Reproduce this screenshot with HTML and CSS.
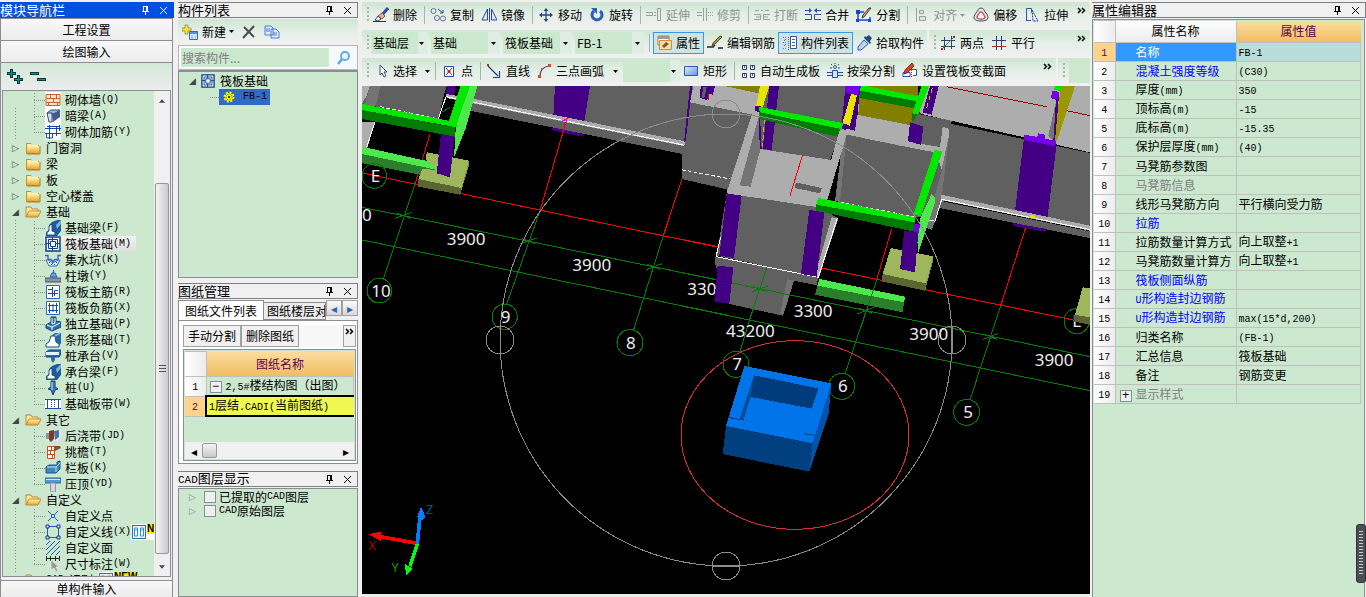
FILE: index.html
```html
<!DOCTYPE html>
<html lang="zh-CN">
<head>
<meta charset="utf-8">
<title>筏板基础 FB-1</title>
<link rel="stylesheet" href="styles.css">
</head>
<body>
<svg class="defs" aria-hidden="true">
  <defs>
    <linearGradient id="gFold" x1="0" y1="0" x2="0" y2="1"><stop offset="0" stop-color="#fff3b0"/><stop offset="1" stop-color="#e8a62c"/></linearGradient>
    <linearGradient id="gRect" x1="0" y1="0" x2="1" y2="1"><stop offset="0" stop-color="#e4efff"/><stop offset="1" stop-color="#5b92ee"/></linearGradient>
  </defs>
  <symbol id="pin" viewBox="0 0 9 9"><path d="M2 0h5v5h1v1H5v3H4V6H1V5h1zM3 1v4h2V1z" fill="currentColor" fill-rule="evenodd"/></symbol>
  <symbol id="close" viewBox="0 0 9 9"><path d="M1 1l7 7M8 1L1 8" stroke="currentColor" fill="none"/></symbol>
  <symbol id="more" viewBox="0 0 9 7"><path d="M1 1l2.500 2.500L1 6M5 1l2.500 2.500L5 6" stroke="#000" stroke-width="1.500" fill="none"/></symbol>
  <symbol id="caret" viewBox="0 0 5 3"><path d="M0 0h5L2.500 3z" fill="currentColor"/></symbol>
  <symbol id="folder" viewBox="0 0 16 16"><path d="M1 3h5l1 2h7v9H1z" fill="#c98f2a"/><path d="M2 4h4l1 1h6v1H2z" fill="#fff1b0"/><path d="M2 6h13v7H2z" fill="url(#gFold)"/><path d="M15 6v8H2" stroke="#a87a2d" fill="none"/></symbol>
  <symbol id="folderopen" viewBox="0 0 16 16"><path d="M1 13V3h5l1 2h6v2" fill="#ffe9a0" stroke="#b98a35"/><path d="M4 7h12l-3 6H1z" fill="url(#gFold)" stroke="#b98a35"/></symbol>
  <symbol id="brick" viewBox="0 0 16 16"><path d="M0 0h16v16H0z" fill="#fff"/><path d="M1 2.500h14v11H1z" fill="#ffe3cc" stroke="#c0622c"/><path d="M1 6.500h14M1 10.500h14M5.500 3v3M11.500 3v3M8.500 7v3M3.500 11v3M12.500 11v3" stroke="#c0622c"/></symbol>
  <symbol id="darkbeam" viewBox="0 0 16 16"><path d="M0 0h16v16H0z" fill="#fff"/><path d="M2 5l4-3h9l-3 4H3z" fill="#aab6d6" stroke="#33446f"/><path d="M7 6l8-4v7l-7 5z" fill="#41598c"/><path d="M2 5h5v9H4z" fill="#d7deef" stroke="#33446f"/></symbol>
  <symbol id="wallrebar" viewBox="0 0 16 16"><path d="M0 0h16v16H0z" fill="#fff"/><path d="M0 4.500h16M0 9.500h16M4.500 1v14M11.500 2v10M2 2.500h12M7.500 9v5h-6v-4M14.500 1v6" stroke="#1646a8" fill="none"/></symbol>
  <symbol id="beam" viewBox="0 0 16 16"><path d="M7 2l5-2h4v11l-4 5H1v-4l3-2V5z" fill="#205b9c"/><path d="M2 12l2-1V6l3-2v7l3 1v3H2z" fill="#fff" stroke="#1a4f90"/><path d="M11 5l5-5v4l-4 5z" fill="#79b6dc"/></symbol>
  <symbol id="raft" viewBox="0 0 16 16"><path d="M1 1h14v14H1z" fill="#f2f8ff" stroke="#0b3f86" stroke-width="1.500"/><path d="M3.500 3.500h9v9h-9z" fill="none" stroke="#0b3f86"/><path d="M5.500 5.500h5v5h-5z" fill="#fff" stroke="#0b3f86"/><path d="M7.500 1v4M7.500 11v4M1 7.500h4M11 7.500h4" stroke="#0b3f86"/></symbol>
  <symbol id="sump" viewBox="0 0 16 16"><path d="M0 3.500h3v4h3l2 2 2-2h3v-4h3" fill="none" stroke="#2c66c0" stroke-width="1.300"/><path d="M1 8l3 6h8l3-6-2 0-5 3-5-3z" fill="#e8f2ff" stroke="#2c66c0"/><path d="M4 10.500h1m2 1h1m3-1h1M6 12.500h1m2 0h1" stroke="#174ea0"/></symbol>
  <symbol id="pier" viewBox="0 0 16 16"><path d="M0 10h16v4H0z" fill="#8694a8" stroke="#46566d"/><path d="M5 9l2-4h3l2 4z" fill="#6ca3df" stroke="#2b5ea0"/><path d="M8 2h1v3H8z" fill="#2b5ea0"/></symbol>
  <symbol id="mainbar" viewBox="0 0 16 16"><path d="M1.500 1.500h13v13h-13z" fill="#fff" stroke="#2c66c0"/><path d="M3 5.500h4.500V3M7.500 5v8M3 9.500h10M9.500 12V6.500H13" stroke="#1449b0" fill="none"/></symbol>
  <symbol id="negbar" viewBox="0 0 16 16"><path d="M1.500 1.500h13v13h-13z" fill="#fff" stroke="#2c66c0"/><path d="M4.500 3v10M11.500 3v10M3 5.500h10M3 10.500h10M8 4v8" stroke="#1449b0" fill="none"/></symbol>
  <symbol id="isolated" viewBox="0 0 16 16"><path d="M1 9l5-3V1h5v4l5 1v5l-9 4-6-3z" fill="#2f6fac" stroke="#0d417c"/><path d="M2 9l5 2 8-4M7 11v3M7 2v6l3-1V2" stroke="#fff" fill="none"/></symbol>
  <symbol id="strip" viewBox="0 0 16 16"><path d="M5 5l5-4h6v10l-3 4z" fill="#2a65a5"/><path d="M1 15v-3l3-2 2-6h4l1 6 3 2v3z" fill="#fff" stroke="#17508e"/><path d="M10 4l5-3" stroke="#82bce0" stroke-width="2"/></symbol>
  <symbol id="pilecap" viewBox="0 0 16 16"><path d="M1 4l3-2h12v4l-2 3H1z" fill="#2f6bab" stroke="#0f4480"/><path d="M1 4h13v3H1z" fill="#e6f1fb"/><path d="M6 9h4v3l-2 3-2-3z" fill="#2f6bab"/></symbol>
  <symbol id="pile" viewBox="0 0 16 16"><path d="M6 1h4v6l3 2-3 1-2 5-2-5-3-1 3-2z" fill="#3a79b8" stroke="#0f3c75"/><path d="M7 2v8" stroke="#cfe4f5"/></symbol>
  <symbol id="band" viewBox="0 0 16 16"><path d="M0 3h16v10H0z" fill="#fff"/><path d="M0 3.500h16M0 12.500h16" stroke="#1f4ea0"/><path d="M2.500 4v8M13.500 4v8" stroke="#1f4ea0"/><path d="M6.500 4v8M9.500 4v8" stroke="#1f4ea0" stroke-dasharray="1 1"/></symbol>
  <symbol id="pourband" viewBox="0 0 16 16"><path d="M1 4l3-2h12v7l-4 4H1z" fill="#e6e9f2"/><path d="M4 3l5-1v9l-3 3-2-2z" fill="#7a3e18"/><path d="M9 3l5-1v7l-4 3z" fill="#4b71b5"/><path d="M1 5h3v6H1z" fill="#8a93a8"/></symbol>
  <symbol id="eaves" viewBox="0 0 16 16"><path d="M2.500 2.500h7v12h-7z" fill="#fff3e6" stroke="#b05a25"/><path d="M2 6.500h7M2 10.500h7M6.500 3v3M5.500 7v3M7.500 11v3" stroke="#b05a25"/><path d="M9 2h6l1 2-6 3z" fill="#70563f"/></symbol>
  <symbol id="railing" viewBox="0 0 16 16"><path d="M1 7l3-2h8V2l3-1v8l-4 4H1z" fill="#3f87c2" stroke="#18558d"/><path d="M2 7h9l4-4M11 7v5" stroke="#c5e3f5" fill="none"/></symbol>
  <symbol id="coping" viewBox="0 0 16 16"><path d="M0 2h16v5H0z" fill="#5a98d4" stroke="#2a67a8"/><path d="M1 3.500h14" stroke="#d3e8fa"/><path d="M5.500 7h5v9h-5z" fill="#d4d8de" stroke="#9097a3"/></symbol>
  <symbol id="ppoint" viewBox="0 0 16 16"><path d="M3 3l3 3M13 3l-3 3M3 13l3-3M13 13l-3-3" stroke="#1f57b8"/><path d="M6.500 6.500h3v3h-3z" fill="#d7e6fa" stroke="#1f57b8"/></symbol>
  <symbol id="pline" viewBox="0 0 16 16"><path d="M2.500 2.500h11v11h-11z" fill="none" stroke="#2057c0"/><path d="M1 1h3v3H1zM12 1h3v3h-3zM1 12h3v3H1zM12 12h3v3h-3z" fill="#cde0f8" stroke="#163f8c"/></symbol>
  <symbol id="parea" viewBox="0 0 16 16"><path d="M1 5l4-4M1 10l9-9M1 15L15 1M6 15l9-9M11 15l4-4" stroke="#2057c0"/></symbol>
  <symbol id="dim" viewBox="0 0 16 16"><path d="M1.500 0v5M14.500 0v5M1 2.500h14M5.500 0v5M10.500 0v5" stroke="#222"/><path d="M6 4v10l3-2 2 4 2-1-2-4h3z" fill="#9a9a9a" stroke="#fff" stroke-width=".5"/></symbol>
  <symbol id="book" viewBox="0 0 14 14"><path d="M0 0h14v14H0z" fill="#e8f4ff" stroke="#2d6fa8" stroke-width="2"/><path d="M2.500 3h3v8h-3zM8.500 3h3v8h-3z" fill="#fff" stroke="#2f8fe0"/><path d="M3 5h2M9 5h2" stroke="#2f8fe0"/></symbol>
  <symbol id="gear" viewBox="0 0 12 12"><circle cx="6" cy="6" r="4" fill="#ff0"/><circle cx="6" cy="6" r="4.500" fill="none" stroke="#ff0" stroke-width="2" stroke-dasharray="2 1.500"/><circle cx="6" cy="6" r="3" fill="none" stroke="#3a3a00" stroke-dasharray="1 1"/><circle cx="6" cy="6" r="1" fill="#000"/></symbol>
  <symbol id="new" viewBox="0 0 16 16"><path d="M3 1h3v3h3v3H6v3H3V7H0V4h3z" fill="#f5e04d" stroke="#a08c20" stroke-width=".8"/><path d="M7.500 7.500h8v8h-8z" fill="#dcecff" stroke="#3b69b0"/><path d="M8 8h7v2H8z" fill="#5b92de"/><path d="M9 12h2m2 0h1M9 14h2m2 0h1" stroke="#7ba0d8"/></symbol>
  <symbol id="del" viewBox="0 0 14 14"><path d="M2 2l10 10M12 1L1 13" stroke="#4c4c4c" stroke-width="2" fill="none"/></symbol>
  <symbol id="copydoc" viewBox="0 0 16 14"><path d="M1 1h6l2 2v7H1zM7 4h5l3 3v6H7z" fill="#e3eefc" stroke="#4a7cc8"/><path d="M2 4h4M2 6h4M9 8h4M9 10h4" stroke="#4a7cc8"/></symbol>
  <symbol id="mag" viewBox="0 0 14 14"><circle cx="8" cy="5" r="4" fill="#eef7ff" stroke="#59a9e6" stroke-width="1.800"/><path d="M5 8l-4 5" stroke="#59a9e6" stroke-width="2.500"/></symbol>
  <symbol id="erase" viewBox="0 0 16 16"><path d="M15 1l-6 7" stroke="#304f9a" stroke-width="3"/><path d="M9 6l3 3-3 3-4-3z" fill="#e9b27c" stroke="#a0592b"/><path d="M5 9l3 3-3 2-3-1z" fill="#eef3ff" stroke="#33487a"/><path d="M0 14.500h13" stroke="#223a70"/></symbol>
  <symbol id="copy" viewBox="0 0 16 16"><circle cx="3.500" cy="4" r="2.500" fill="#e9edf3" stroke="#65738a"/><circle cx="7" cy="11" r="2.500" fill="#e9edf3" stroke="#65738a"/><circle cx="13" cy="11.500" r="2.500" fill="#e9edf3" stroke="#65738a"/><path d="M8 2l5 4M13 3v3h-3" stroke="#2b4d8e" fill="none"/></symbol>
  <symbol id="mirror" viewBox="0 0 16 16"><path d="M6.500 2v11H1zM10.500 2v11H16z" fill="#dfe9fb" stroke="#28499a"/><path d="M8.500 1v14" stroke="#28499a"/></symbol>
  <symbol id="move" viewBox="0 0 16 16"><path d="M8 2v12M2 8h12" stroke="#23458c" stroke-width="1.300"/><path d="M8 1l2.500 3h-5zM8 15l2.500-3h-5zM1 8l3-2.500v5zM15 8l-3-2.500v5z" fill="#23458c"/></symbol>
  <symbol id="rotate" viewBox="0 0 16 16"><path d="M11 4a5 5 0 1 1-6 0" fill="none" stroke="#2c5fb8" stroke-width="3"/><path d="M2 1h6v6z" fill="#2c5fb8"/></symbol>
  <symbol id="extend" viewBox="0 0 16 16"><path d="M0 5.500h6.500v3H0M8 5.500h2M8 8.500h2M11.500 1.500h3v12h-3z" fill="none" stroke="#98a09c"/></symbol>
  <symbol id="trim" viewBox="0 0 16 16"><path d="M0 5.500h5M0 8.500h5M6.500 1v13M9.500 1v13M11 5.500h1m1 0h1m1 0h1M11 8.500h1m1 0h1m1 0h1" fill="none" stroke="#98a09c"/></symbol>
  <symbol id="break" viewBox="0 0 16 16"><path d="M1 3.500h4m2 0h2m2 0h4M0 7.500h6.500v5H0M16 7.500H9.500v5H16M2 10h4M10 10h4" fill="none" stroke="#98a09c"/></symbol>
  <symbol id="merge" viewBox="0 0 16 16"><path d="M0 3.500h6m4 0h6M0 12.500h6.500v-5H0M16 12.500H9.500v-5H16" fill="none" stroke="#35507f"/><path d="M4 1l3 2.500-3 2.500zM12 1L9 3.500 12 6z" fill="#2751a8"/></symbol>
  <symbol id="split" viewBox="0 0 16 16"><path d="M2 5h6M2 5v8h12v-3" fill="none" stroke="#1747d0" stroke-width="1.500"/><path d="M0 3h4v4H0zM0 12h3v3H0zM12 12h3v3h-3z" fill="#1747d0"/><path d="M15 1l-7 9-2 1 1-3 6-7z" fill="#e2a55e" stroke="#3b3b3b"/></symbol>
  <symbol id="align" viewBox="0 0 16 16"><path d="M3.500 1v14M6.500 3.500h4v3h-4zM6.500 9.500h6v4h-6z" fill="#dde3df" stroke="#98a09c"/></symbol>
  <symbol id="offset" viewBox="0 0 16 16"><path d="M8 1c3 0 3 3 5 5 4 5 2 8-5 8s-9-3-5-8c2-2 2-5 5-5z" fill="#f4dede" stroke="#33477c"/><path d="M8 5c2 0 2 2 3 3 2 3 1 4-3 4s-5-1-3-4c1-1 1-3 3-3z" fill="#fff" stroke="#c65050" stroke-width="1.400"/></symbol>
  <symbol id="stretch" viewBox="0 0 16 16"><path d="M2.500 13.500v-12h5v4M2 13.500h5" fill="none" stroke="#2e56b0"/><path d="M8 3l6 11H9z" fill="none" stroke="#2b3a60" stroke-dasharray="2 1"/></symbol>
  <symbol id="props" viewBox="0 0 16 16"><path d="M1 1h11v9H1z" fill="#fff" stroke="#888"/><path d="M1 1h11v3H1z" fill="#9a9a9a"/><path d="M2.500 5.500h12v9h-12z" fill="#f9dca8" stroke="#e08a28"/><path d="M5 11l4-4 3 2-5 4" fill="#7c5a2c"/></symbol>
  <symbol id="editbar" viewBox="0 0 16 16"><path d="M0 12h6l2-2M11 13h5" stroke="#222" stroke-width="1.400" fill="none"/><path d="M15 2l-7 7-3 2 1-3 7-7z" fill="#a9964c" stroke="#56491b"/></symbol>
  <symbol id="complist" viewBox="0 0 16 16"><path d="M1 2.500h2.500v3H1M1 7.500h2.500v3H1M1 13.500h2.500M6.500 2v13" fill="none" stroke="#56708f" stroke-dasharray="1 1"/><path d="M8.500 1.500h6v12h-6z" fill="#fff" stroke="#33568c"/><path d="M10 4.500h3M10 7.500h3M10 10.500h3" stroke="#2c66c0"/></symbol>
  <symbol id="picker" viewBox="0 0 16 16"><path d="M8 5l4 4-7 6H2v-3z" fill="#b9d6f2" stroke="#2a5ca0"/><path d="M8 3l6 6 1-1-1-2 2-3-3-3-3 2-1-1z" fill="#23478a"/></symbol>
  <symbol id="twopt" viewBox="0 0 16 16"><path d="M4.500 2v13M11.500 1v13M1 5.500h14M1 11.500h14" stroke="#2f3f6e"/><path d="M2 14L14 2" stroke="#2b8a2b"/><path d="M1 13h2v2H1zM13 1h2v2h-2z" fill="#9c1f1f"/></symbol>
  <symbol id="parallel" viewBox="0 0 16 16"><path d="M5.500 1v14M10.500 1v14M1 5.500h14" stroke="#2f3f6e"/><path d="M1 11.500h14" stroke="#b02828"/></symbol>
  <symbol id="cursor" viewBox="0 0 16 16"><path d="M5 2v10l2-2 2 4 2-1-2-4h3z" fill="#fff" stroke="#39507f"/></symbol>
  <symbol id="point" viewBox="0 0 16 16"><path d="M3.500 3.500h9v10h-9z" fill="#fff" stroke="#28499a"/><path d="M5 5l6 7M11 5l-6 7" stroke="#28499a"/><circle cx="8" cy="8.500" r="1.500" fill="#c22"/></symbol>
  <symbol id="line" viewBox="0 0 16 16"><path d="M2 3l10 10M13.500 8v6.500H7" stroke="#203f86" stroke-width="1.200" fill="none"/><path d="M1 1h2v2H1z" fill="#a33"/></symbol>
  <symbol id="arc" viewBox="0 0 16 16"><path d="M3 13C3 8 6 4 12 3" fill="none" stroke="#39507f" stroke-width="1.200"/><path d="M1 12h3v3H1zM4 5h2v2H4zM11 1h3v3h-3z" fill="#d8492c"/></symbol>
  <symbol id="rect" viewBox="0 0 16 16"><path d="M1.500 3.500h13v9h-13z" fill="url(#gRect)" stroke="#2c58b8"/></symbol>
  <symbol id="autoslab" viewBox="0 0 16 16"><path d="M2.500 2.500h4v4h-4zM10.500 2.500h4v4h-4zM2.500 10.500h4v4h-4zM10.500 10.500h4v4h-4z" fill="#fff" stroke="#28395f"/><path d="M4.500 3v2M12.500 3v2M4.500 11v2M12.500 11v2" stroke="#2c66c0"/></symbol>
  <symbol id="beamsplit" viewBox="0 0 16 16"><path d="M0 9.500h5.500v3H0M16 9.500h-5.500v3H16M5.500 7.500h5v7h-5z" fill="#d6e5fb" stroke="#24519c"/><circle cx="8" cy="4" r="1.500" fill="#fff" stroke="#24519c"/><path d="M8 0v1M4 1l1 1M12 1l-1 1M3 5h2M11 5h2" stroke="#24519c"/></symbol>
  <symbol id="section" viewBox="0 0 16 16"><path d="M1 9.500h7v4H1zM8 6.500h6.500v6H11" fill="#fff" stroke="#2450c0"/><path d="M9.500 3v12" stroke="#c22" stroke-dasharray="1 1"/><path d="M10 0l2 3-7 7-3 1 1-4z" fill="#d8442e" stroke="#822"/></symbol>
</svg>

<div class="app">
  <aside class="panel nav">
    <header class="title active"><h2>模块导航栏</h2><button aria-label="固定"><svg><use href="#pin"/></svg></button><button aria-label="关闭"><svg><use href="#close"/></svg></button></header>
    <div class="navbody">
      <button class="section">工程设置</button>
      <button class="section">绘图输入</button>
      <div class="navtools">
        <button aria-label="全部展开"><svg width="16" height="16" viewBox="0 0 16 16"><path d="M0 4.500h9M4.500 0v9M7 10.500h9M11.500 6v9" stroke="#003838" stroke-width="3"/><path d="M1 4.500h7M4.500 1v7M8 10.500h7M11.500 7v7" stroke="#0d9b8c"/></svg></button>
        <button aria-label="全部折叠"><svg width="16" height="16" viewBox="0 0 16 16"><path d="M0 4.500h9M7 10.500h9" stroke="#003838" stroke-width="3"/><path d="M1 4.500h7M8 10.500h7" stroke="#0d9b8c"/></svg></button>
      </div>
      <div class="treebox">
        <ul class="tree">
          <li class="open"><ul>
            <li><svg><use href="#brick"/></svg>砌体墙<i>(Q)</i></li>
            <li><svg><use href="#darkbeam"/></svg>暗梁<i>(A)</i></li>
            <li><svg><use href="#wallrebar"/></svg>砌体加筋<i>(Y)</i></li>
          </ul></li>
          <li><div class="branch"><span class="twist">▷</span><svg><use href="#folder"/></svg>门窗洞</div></li>
          <li><div class="branch"><span class="twist">▷</span><svg><use href="#folder"/></svg>梁</div></li>
          <li><div class="branch"><span class="twist">▷</span><svg><use href="#folder"/></svg>板</div></li>
          <li><div class="branch"><span class="twist">▷</span><svg><use href="#folder"/></svg>空心楼盖</div></li>
          <li class="open"><div class="branch"><span class="twist">◢</span><svg><use href="#folderopen"/></svg>基础</div><ul>
            <li><svg><use href="#beam"/></svg>基础梁<i>(F)</i></li>
            <li class="current"><svg><use href="#raft"/></svg>筏板基础<i>(M)</i></li>
            <li><svg><use href="#sump"/></svg>集水坑<i>(K)</i></li>
            <li><svg><use href="#pier"/></svg>柱墩<i>(Y)</i></li>
            <li><svg><use href="#mainbar"/></svg>筏板主筋<i>(R)</i></li>
            <li><svg><use href="#negbar"/></svg>筏板负筋<i>(X)</i></li>
            <li><svg><use href="#isolated"/></svg>独立基础<i>(P)</i></li>
            <li><svg><use href="#strip"/></svg>条形基础<i>(T)</i></li>
            <li><svg><use href="#pilecap"/></svg>桩承台<i>(V)</i></li>
            <li><svg><use href="#beam"/></svg>承台梁<i>(F)</i></li>
            <li><svg><use href="#pile"/></svg>桩<i>(U)</i></li>
            <li><svg><use href="#band"/></svg>基础板带<i>(W)</i></li>
          </ul></li>
          <li class="open"><div class="branch"><span class="twist">◢</span><svg><use href="#folderopen"/></svg>其它</div><ul>
            <li><svg><use href="#pourband"/></svg>后浇带<i>(JD)</i></li>
            <li><svg><use href="#eaves"/></svg>挑檐<i>(T)</i></li>
            <li><svg><use href="#railing"/></svg>栏板<i>(K)</i></li>
            <li><svg><use href="#coping"/></svg>压顶<i>(YD)</i></li>
          </ul></li>
          <li class="open"><div class="branch"><span class="twist">◢</span><svg><use href="#folderopen"/></svg>自定义</div><ul>
            <li><svg><use href="#ppoint"/></svg>自定义点</li>
            <li><svg><use href="#pline"/></svg>自定义线<i>(X)</i><span class="tag"><svg><use href="#book"/></svg><b>NEW</b></span></li>
            <li><svg><use href="#parea"/></svg>自定义面</li>
            <li><svg><use href="#dim"/></svg>尺寸标注<i>(W)</i></li>
          </ul></li>
          <li><div class="branch"><span class="twist">◢</span><svg><use href="#folderopen"/></svg><i>CAD</i>识别<span class="tag"><svg><use href="#book"/></svg><b>NEW</b></span></div></li>
        </ul>
        <div class="vscroll"><button aria-label="向上"><svg class="arrow"><use href="#caret" transform="rotate(180 3 2)"/></svg></button><div class="vtrack"><div class="vthumb"></div></div><button aria-label="向下"><svg class="arrow"><use href="#caret"/></svg></button></div>
      </div>
      <button class="section last">单构件输入</button>
    </div>
  </aside>

  <div class="mid">
    <section class="panel comp">
      <header class="title"><h2>构件列表</h2><button aria-label="固定"><svg><use href="#pin"/></svg></button><button aria-label="关闭"><svg><use href="#close"/></svg></button></header>
      <div class="bar comptools">
        <button class="tb"><svg class="ic"><use href="#new"/></svg>新建<svg class="caret"><use href="#caret"/></svg></button>
        <button aria-label="删除"><svg width="14" height="14"><use href="#del"/></svg></button>
        <button aria-label="复制"><svg width="16" height="14"><use href="#copydoc"/></svg></button>
      </div>
      <div class="search"><input type="text" placeholder="搜索构件..." aria-label="搜索构件"><button aria-label="搜索"><svg width="14" height="14"><use href="#mag"/></svg></button></div>
      <div class="complist">
        <div class="cnode"><span class="twist">◢</span><svg class="ic"><use href="#raft"/></svg>筏板基础</div>
        <div class="cleaf"><span class="sel"><svg width="12" height="12"><use href="#gear"/></svg><i>FB-1</i></span></div>
      </div>
    </section>

    <section class="panel draw">
      <header class="title"><h2>图纸管理</h2><button aria-label="固定"><svg><use href="#pin"/></svg></button><button aria-label="关闭"><svg><use href="#close"/></svg></button></header>
      <div class="tabs"><button class="tab on">图纸文件列表</button><button class="tab">图纸楼层对</button><span class="tabnav"><button aria-label="上一个">◂</button><button aria-label="下一个">▸</button></span></div>
      <div class="tabbody">
        <div class="drawtools"><button>手动分割</button><button>删除图纸</button><button class="ext" aria-label="更多"><svg width="9" height="7"><use href="#more"/></svg></button></div>
        <div class="gridbox">
          <table class="sheets">
            <thead><tr><th class="num"></th><th class="gold">图纸名称</th></tr></thead>
            <tbody>
              <tr><th class="num"><i>1</i></th><td><span class="box">−</span><i>2,5#</i>楼结构图（出图）</td></tr>
              <tr class="cur"><th class="num"><i>2</i></th><td><i>1</i>层结<i>.CADI(</i>当前图纸<i>)</i></td></tr>
            </tbody>
          </table>
          <div class="hscroll"><button aria-label="向左">◂</button><div class="htrack"><div class="hthumb"></div></div><button aria-label="向右">▸</button></div>
        </div>
      </div>
    </section>

    <section class="panel layers">
      <header class="title"><h2><i>CAD</i>图层显示</h2><button aria-label="固定"><svg><use href="#pin"/></svg></button><button aria-label="关闭"><svg><use href="#close"/></svg></button></header>
      <div class="layerlist">
        <label><span class="twist">▷</span><input type="checkbox">已提取的<i>CAD</i>图层</label>
        <label><span class="twist">▷</span><input type="checkbox"><i>CAD</i>原始图层</label>
      </div>
    </section>
  </div>

  <main class="work">
    <div class="barrow"><div class="bar grow">
      <span class="grip"></span>
      <button class="tb"><svg class="ic"><use href="#erase"/></svg>删除</button><span class="sep"></span>
      <button class="tb"><svg class="ic"><use href="#copy"/></svg>复制</button>
      <button class="tb"><svg class="ic"><use href="#mirror"/></svg>镜像</button><span class="sep"></span>
      <button class="tb"><svg class="ic"><use href="#move"/></svg>移动</button>
      <button class="tb"><svg class="ic"><use href="#rotate"/></svg>旋转</button><span class="sep"></span>
      <button class="tb" disabled><svg class="ic"><use href="#extend"/></svg>延伸</button>
      <button class="tb" disabled><svg class="ic"><use href="#trim"/></svg>修剪</button><span class="sep"></span>
      <button class="tb" disabled><svg class="ic"><use href="#break"/></svg>打断</button>
      <button class="tb"><svg class="ic"><use href="#merge"/></svg>合并</button>
      <button class="tb"><svg class="ic"><use href="#split"/></svg>分割</button><span class="sep"></span>
      <button class="tb tight" disabled><svg class="ic"><use href="#align"/></svg>对齐<svg class="caret"><use href="#caret"/></svg></button>
      <button class="tb"><svg class="ic"><use href="#offset"/></svg>偏移</button>
      <button class="tb"><svg class="ic"><use href="#stretch"/></svg>拉伸</button>
      <button class="more" aria-label="更多"><svg><use href="#more"/></svg></button>
    </div></div>
    <div class="barrow">
      <div class="bar">
        <span class="grip slim"></span>
        <span class="combo small"><select aria-label="楼层"><option>基础层</option></select><svg class="caret"><use href="#caret"/></svg></span>
        <span class="combo"><select aria-label="构件分类"><option>基础</option></select><svg class="caret"><use href="#caret"/></svg></span>
        <span class="combo"><select aria-label="构件类型"><option>筏板基础</option></select><svg class="caret"><use href="#caret"/></svg></span>
        <span class="combo"><select aria-label="构件"><option>FB-1</option></select><svg class="caret"><use href="#caret"/></svg></span>
        <span class="sep wide"></span>
        <button class="tb on"><svg class="ic"><use href="#props"/></svg>属性</button>
        <button class="tb mid4"><svg class="ic"><use href="#editbar"/></svg>编辑钢筋</button>
        <button class="tb on"><svg class="ic"><use href="#complist"/></svg>构件列表</button>
        <button class="tb mid4"><svg class="ic"><use href="#picker"/></svg>拾取构件</button>
      </div>
      <div class="bar grow">
        <span class="grip"></span>
        <button class="tb"><svg class="ic"><use href="#twopt"/></svg>两点</button>
        <button class="tb"><svg class="ic"><use href="#parallel"/></svg>平行</button>
        <button class="more" aria-label="更多"><svg><use href="#more"/></svg></button>
      </div>
    </div>
    <div class="barrow">
      <div class="bar draws">
        <span class="grip"></span>
        <button class="tb"><svg class="ic"><use href="#cursor"/></svg>选择<svg class="caret far"><use href="#caret"/></svg></button><span class="sep"></span>
        <button class="tb"><svg class="ic"><use href="#point"/></svg>点</button><span class="sep"></span>
        <button class="tb"><svg class="ic"><use href="#line"/></svg>直线</button>
        <button class="tb"><svg class="ic"><use href="#arc"/></svg>三点画弧<svg class="caret far"><use href="#caret"/></svg></button>
        <span class="combo small"><select aria-label="画弧方式"><option></option></select><svg class="caret"><use href="#caret"/></svg></span>
        <button class="tb"><svg class="ic"><use href="#rect"/></svg>矩形</button><span class="sep"></span>
        <button class="tb"><svg class="ic"><use href="#autoslab"/></svg>自动生成板</button>
        <button class="tb"><svg class="ic"><use href="#beamsplit"/></svg>按梁分割</button>
        <button class="tb"><svg class="ic"><use href="#section"/></svg>设置筏板变截面</button>
        <button class="more" aria-label="更多"><svg><use href="#more"/></svg></button>
      </div>
      <div class="bar grow"><span class="grip"></span><span class="blank"></span></div>
    </div>

    <svg class="view" viewBox="0 0 2184 1524" role="img" aria-label="三维视图">
      <g class="scene">
        <!-- upper left: walls, beams and footing -->
        <g transform="translate(-6 -6)">
          <path class="g" d="M6 6H260L250 40 235 105 60 70 6 60z"/><path class="l" d="M6 6H30L20 35 6 60z"/><path class="m" d="M30 6H62L45 70 14 62z"/>
          <path class="l" d="M6 115H45L22 192 6 188z"/><path class="w" d="M45 115L20 190"/>
          <path class="p" d="M262 6H287L282 35 257 30z"/>
          <path class="g" d="M350 6H1000L975 180 330 47z"/><path class="p" d="M585 6H690L672 118 580 98z"/>
          <path class="g" d="M330 55L975 187 968 210 330 80z"/><path class="l" d="M258 30L335 43 975 172V187L260 42z"/><path class="w" d="M258 38L975 184M258 38L235 105"/><path class="p" d="M578 130L670 150 668 158 572 138z"/>
          <path class="l" d="M1000 6H1120V82L990 55z"/><path class="g" d="M990 55L1120 82V313L965 282 970 210 975 180z"/><path class="pl" d="M995 10L975 175"/><path class="p" d="M1030 6H1068L1060 35 1045 30 1040 48 1025 42z"/>
          <path class="w dash" d="M60 68L235 105M970 258L1110 284"/>
          <path class="r" d="M6 267L1110 497M210 150L165 300M622 100L540 380M975 258L910 455M1046 30v20"/>
          <path class="mg" d="M606 110l16-8v10z"/>
          <path class="n" d="M165 300L70 585M540 380L440 660M910 455L820 740M6 370L1110 595M6 468L1110 695M105 403L155 385M110 387L150 403M480 480L530 462M485 463L525 479M857 558L907 538M860 540L900 556M245 85L270 70"/>
          <path class="ld" d="M6 210L232 258 180 272 6 237z"/><path class="lg" d="M6 188L232 238V258L6 210z"/>
          <path class="pt" d="M200 205L327 230 305 312 175 285 187 255 235 258 198 228z"/><path class="pd" d="M175 285L305 312 300 332 175 308z"/><path class="pm" d="M327 230V245L300 332 305 310z"/>
          <path class="lg" d="M330 6H352L318 130 282 220 288 120z"/><path class="b" d="M302 6H330L290 120 267 110z"/>
          <path class="p" d="M243 150H285L270 280 230 268z"/><path class="d" d="M6 78L285 130V158L6 105z"/><path class="b" d="M6 60L290 115V130L6 78z"/>
          <g class="n"><circle cx="43" cy="276" r="37"/><circle cx="58" cy="620" r="37"/><circle cx="434" cy="698" r="38"/><circle cx="810" cy="776" r="39"/></g>
        </g>
        <!-- upper right: open boxes, columns and slabs -->
        <g transform="translate(954 -6)">
          <path class="r" d="M0 465L120 489M415 550L610 590M735 617L1180 708M635 435L590 588M1050 390L962 665"/>
          <path class="g" d="M250 6H540L530 95 480 150 450 228 235 200 235 90zM35 58L235 90 150 318 5 285V210L15 180z"/>
          <path class="g" d="M480 135L690 85 815 110 795 345 765 398 700 400 478 355z"/>
          <path class="w dash" d="M5 257L150 285"/>
          <path class="l" d="M40 6H250L235 95 30 55z"/><path class="p" d="M62 6H105L98 32 88 30 82 48 60 42zM35 6L15 175 12 175 30 6z"/><path class="g" d="M70 10h10l-7 32-8-2z"/><path class="r" d="M85 30v18"/><path class="o" d="M135 6H240L235 28z"/>
          <path class="p" d="M268 6H297L275 198 248 195zM240 95L245 195 220 275 225 200z"/><path class="yd" d="M254 105L247 190"/>
          <path class="y" d="M240 6H268L246 76 228 68z"/><path class="p" d="M224 65L245 68 240 85 224 80z"/>
          <path class="l" d="M240 195L455 228 420 365 150 318z"/><path class="m" d="M235 95L240 200 212 308 172 303z"/><path class="l" d="M218 85L238 92 175 318 143 316z"/>
          <path class="r" d="M368 212L330 335"/><path class="g" d="M347 295L425 312 420 328 345 312z"/>
          <path class="l" d="M535 60H700L725 90 1230 205V6H745L690 130 725 180 785 190 775 207 495 153 480 140 535 92z"/>
          <path class="o" d="M540 6H715V90L690 123 535 93z"/><path class="d" d="M540 18L710 50 703 73 538 42z"/><path class="b" d="M540 6H560L720 38 712 52 540 20z"/>
          <path class="p" d="M750 6H776L755 92 728 85z"/><path class="yd" d="M757 12L738 80"/><path class="b" d="M725 6H747L715 92 697 88z"/><path class="d" d="M697 88L712 92 700 112 694 108z"/>
          <path class="g" d="M705 97L1230 207V430L783 335 800 150 725 118z"/><path class="m" d="M1130 45L1105 155 1120 170z"/>
          <path class="p" d="M690 115L730 128 723 182 684 172z"/>
          <path class="g" d="M500 152L768 207 708 398 478 355z"/><path class="m" d="M490 155L500 152 480 355 465 350z"/><path class="l" d="M478 140L502 145 440 355 415 367z"/>
          <path class="m" d="M798 160L808 140 785 345 765 412 755 437 738 432 785 260z"/><path class="l" d="M788 128L808 135V150L785 255 765 195 780 190z"/>
          <path class="dr" d="M800 8L1100 68M1160 80L1230 95"/>
          <path class="od" d="M1143 6H1185L1130 172 1120 168z"/><path class="b" d="M1127 6H1147L1140 20 1120 18z"/><path class="p" d="M1118 20L1138 24 1125 170 1120 170 1128 48 1112 42z"/><path class="v" d="M1118 20L1138 24 1132 46 1112 42z"/>
          <path class="p" d="M1033 155L1130 180 1102 402 1005 380z"/><path class="v" d="M1033 152L1072 159 1075 148 1095 152V164L1128 171 1125 187 1030 167z"/>
          <path class="g" d="M778 350L1230 442V462L778 372z"/><path class="l" d="M783 332L1230 425V440L783 348z"/><path class="w" d="M1230 437L785 346 765 412 748 408"/><path class="p" d="M1000 417L1100 435 1095 443 1000 426z"/><path class="y" d="M1050 393l14 2v9l-12-1z"/>
          <path class="p" d="M495 20H540L525 140 484 130z"/><path class="v" d="M495 6H543L535 33 495 25z"/><path class="y" d="M513 30L531 33 510 125 487 118z"/><path class="p" d="M484 118L502 122 498 138 484 134z"/>
          <path class="d" d="M240 82L482 132 472 158 238 105z"/><path class="b" d="M235 68L492 118 484 135 240 85z"/>
          <path class="g" d="M185 325L412 368 470 400 415 580 110 515 140 328zM105 518L415 580 410 604 340 590 308 695 148 660 105 540z"/><path class="m" d="M322 585L342 590 310 693 300 690z"/>
          <path class="l" d="M143 314L415 363V370L140 328zM455 400L475 402 417 580 405 575z"/><path class="w" d="M122 460L108 518 415 580 472 402"/>
          <path class="p" d="M140 328L185 335 162 522 118 515zM113 545L160 550 148 660 103 652zM388 378L433 385 410 578 363 570z"/>
          <path class="w dash" d="M480 355L702 398"/><path class="d" d="M408 360L705 412 703 443 408 380z"/><path class="b" d="M414 342L705 400V415L410 362z"/>
          <path class="lg" d="M755 330L765 340V355L715 505 712 470 722 400z"/><path class="b" d="M763 197L787 203 722 397 701 390z"/>
          <path class="pt" d="M632 492L760 517 740 600 608 570z"/><path class="pd" d="M608 570L738 598 735 620 605 592z"/><path class="pm" d="M760 517L758 535 735 620 738 598z"/>
          <path class="p" d="M673 440L715 445 705 565 660 555z"/><path class="v" d="M703 418L720 422 716 447 700 443z"/>
          <path class="lg" d="M418 585L675 638 672 657 412 605z"/><path class="ld" d="M412 605L672 655 668 685 405 632z"/>
          <path class="n" d="M0 565L1230 818M0 665L1230 920M262 545L208 710 180 803M590 588L495 870M962 665L870 948M215 624L265 605M220 607L262 624M532 690L582 670M537 673L577 688M910 766L955 748M912 750L950 766"/>
          <circle class="n" cx="1190" cy="711" r="38"/>
        </g>
        <!-- selected pit and lower axis bubbles -->
        <g transform="translate(834 702)">
          <g class="n"><circle cx="288" cy="133" r="39"/><circle cx="605" cy="199" r="39"/><circle cx="980" cy="277" r="39"/></g>
          <path fill="#003f80" d="M258 318L518 370 508 455 248 402z"/><path fill="#0055aa" d="M574 190L566 280 508 455 518 370z"/><path fill="#0074e8" d="M313 138L574 190 518 370 258 318z"/>
          <path fill="#003c7c" d="M342 166L535 205 515 266 332 231z"/><path fill="#004f9c" d="M342 166L332 231 310 302 298 298z"/><path fill="none" stroke="#003c7c" stroke-width="3" d="M263 292L308 300M492 341L526 346"/>
        </g>
        <g class="c"><circle cx="1092" cy="762" r="678"/><circle cx="1092" cy="84" r="42"/><circle cx="1092" cy="1440" r="42"/><circle cx="414" cy="762" r="42"/><circle cx="1770" cy="762" r="42"/><path d="M1050 1440h84M414 720v84M1770 720v84"/></g>
        <ellipse cx="1299" cy="1047" rx="342" ry="283" fill="none" stroke="#d83030" stroke-width="3"/>
        <g class="lab">
          <text x="254" y="477">3900</text><text x="631" y="554">3900</text><text x="976" y="626">330</text><text x="0" y="404">0</text>
          <text x="28" y="632">10</text><text x="416" y="710">9</text><text x="792" y="788">8</text><text x="26" y="287">E</text>
          <text x="1295" y="692">3300</text><text x="1642" y="762">3900</text><text x="1092" y="752">43200</text><text x="2018" y="840">3900</text>
          <text x="1111" y="852">7</text><text x="1428" y="919">6</text><text x="1804" y="995">5</text><text x="2131" y="724">E</text>
        </g>
        <g transform="translate(954 -6)"><path class="p" d="M113 545L160 550 148 660 103 652z"/><path class="pt" d="M1208 610L1230 613V702L1185 692z"/><path class="pd" d="M1182 692L1230 700V722L1180 712z"/></g>
        <!-- axis tripod -->
        <g transform="translate(-6 1182)">
          <path stroke="#f00" stroke-width="11" d="M60 170L172 190"/><path fill="#f00" d="M26 163L62 155V183z"/>
          <path stroke="#0f0" stroke-width="11" d="M172 192L150 258"/><path fill="#0f0" d="M134 252L158 266 139 286z"/>
          <path stroke="#0080ff" stroke-width="11" d="M172 192L180 110"/><path fill="#0080ff" d="M183 80L196 110 187 122 172 110z"/>
          <text class="ax" x="26" y="211" fill="#f00">X</text><text class="ax" x="95" y="276" fill="#0f0">Y</text><text class="ax" x="198" y="102" fill="#0080ff">Z</text>
        </g>
      </g>
    </svg>
    <div class="status"></div>
  </main>

  <aside class="panel props">
    <header class="title"><h2>属性编辑器</h2><button aria-label="固定"><svg><use href="#pin"/></svg></button><button aria-label="关闭"><svg><use href="#close"/></svg></button></header>
    <div class="propbox">
      <table class="proptable">
        <thead><tr><th class="num"></th><th class="name">属性名称</th><th class="gold">属性值</th></tr></thead>
        <tbody>
          <tr class="cur"><th class="num"><i>1</i></th><td>名称</td><td><i>FB-1</i></td></tr>
          <tr class="key"><th class="num"><i>2</i></th><td>混凝土强度等级</td><td><i>(C30)</i></td></tr>
          <tr><th class="num"><i>3</i></th><td>厚度<i>(mm)</i></td><td><i>350</i></td></tr>
          <tr><th class="num"><i>4</i></th><td>顶标高<i>(m)</i></td><td><i>-15</i></td></tr>
          <tr><th class="num"><i>5</i></th><td>底标高<i>(m)</i></td><td><i>-15.35</i></td></tr>
          <tr><th class="num"><i>6</i></th><td>保护层厚度<i>(mm)</i></td><td><i>(40)</i></td></tr>
          <tr><th class="num"><i>7</i></th><td>马凳筋参数图</td><td></td></tr>
          <tr class="off"><th class="num"><i>8</i></th><td>马凳筋信息</td><td></td></tr>
          <tr><th class="num"><i>9</i></th><td>线形马凳筋方向</td><td>平行横向受力筋</td></tr>
          <tr class="key"><th class="num"><i>10</i></th><td>拉筋</td><td></td></tr>
          <tr><th class="num"><i>11</i></th><td>拉筋数量计算方式</td><td>向上取整<i>+1</i></td></tr>
          <tr><th class="num"><i>12</i></th><td>马凳筋数量计算方</td><td>向上取整<i>+1</i></td></tr>
          <tr class="key"><th class="num"><i>13</i></th><td>筏板侧面纵筋</td><td></td></tr>
          <tr class="key"><th class="num"><i>14</i></th><td><i>U</i>形构造封边钢筋</td><td></td></tr>
          <tr class="key"><th class="num"><i>15</i></th><td><i>U</i>形构造封边钢筋</td><td><i>max(15*d,200)</i></td></tr>
          <tr><th class="num"><i>16</i></th><td>归类名称</td><td><i>(FB-1)</i></td></tr>
          <tr><th class="num"><i>17</i></th><td>汇总信息</td><td>筏板基础</td></tr>
          <tr><th class="num"><i>18</i></th><td>备注</td><td>钢筋变更</td></tr>
          <tr class="off"><th class="num"><i>19</i></th><td class="group"><button class="box" aria-label="展开">+</button>显示样式</td><td></td></tr>
        </tbody>
      </table>
    </div>
    <div class="handle"></div>
  </aside>
</div>
</body>
</html>
```

FILE: styles.css
```css
* { box-sizing: border-box; }
body { margin: 0; background: #f0f0f0; color: #000; font: 12px/16px "Noto Sans CJK SC", "Liberation Sans", sans-serif; overflow: hidden; }
button { margin: 0; padding: 0; border: 0; background: none; color: inherit; font: inherit; display: flex; align-items: center; justify-content: center; white-space: nowrap; }
h2 { margin: 0; font: inherit; font-size: 13px; }
ul { list-style: none; margin: 0; padding: 0; }
i { font: 10px/14px "Liberation Mono", monospace; }
h2 i { font-size: 11px; }
svg { flex: none; display: block; }
.defs { position: absolute; width: 0; height: 0; }

.app { display: grid; grid-template-columns: 174px 182px minmax(0, 1fr) 274px; column-gap: 2px; height: 100vh; padding-top: 2px; }
.app > .work { margin-left: 2px; }
.panel { display: flex; flex-direction: column; min-height: 0; }
.title { display: flex; align-items: center; gap: 9px; height: 16px; flex: none; padding-right: 5px; border: 1px solid #7f7f7f; border-left: 0; }
.title h2 { flex: 1; line-height: 14px; }
.title svg { width: 9px; height: 9px; }
.title.active { background: #0050e0; border-color: #0050e0; color: #fff; }
.bar { display: flex; align-items: center; background: linear-gradient(#cfe6d3, #e4efe6 50%, #f0f0f0); border-radius: 2px; }
.twist { font: 9px/16px "DejaVu Sans", sans-serif; color: #444; }

/* module navigator */
.navbody { flex: 1; min-height: 0; display: flex; flex-direction: column; border: 1px solid #8b8d94; border-bottom: 0; margin-right: 1px; }
.section { height: 22px; flex: none; background: linear-gradient(#f8f8f8, #ececec); border-bottom: 1px solid #8b8d94; }
.section.last { height: 17px; border: 0; border-top: 1px solid #8b8d94; margin-top: 3px; }
.navtools { display: flex; gap: 7px; align-items: center; height: 27px; flex: none; padding-left: 6px; background: linear-gradient(#d2e8d7, #ededed); }
.treebox { flex: 1; min-height: 0; display: flex; margin: 0 1px; border: 1px solid #8b8d94; background: #cce8cf; overflow: hidden; }
.tree { flex: 1; min-width: 0; overflow: hidden; padding-top: 1px; }
.branch, .tree ul > li { display: flex; align-items: center; height: 16px; white-space: nowrap; }
.tree svg { width: 16px; height: 16px; }
.branch { gap: 5px; padding-left: 9px; }
.branch .twist { width: 8px; }
.tree .open { background: repeating-linear-gradient(#8a8a8a 0 1px, transparent 1px 3px) 12px 16px / 1px 100% no-repeat; }
.tree ul { margin-left: 31px; background: repeating-linear-gradient(#8a8a8a 0 1px, transparent 1px 3px) 0 -8px / 1px 100% no-repeat; }
.tree ul > li svg { margin-right: 4px; }
.tree ul > li::before { content: ""; width: 11px; border-top: 1px dotted #8a8a8a; flex: none; }
.tree .current { background: linear-gradient(#f2f4f2, #dcdfdc) 10px 0 / 92px 100% no-repeat; }
.tree .tag { display: flex; align-items: center; background: #fff; }
.tree .tag svg { width: 14px; height: 14px; margin: 1px; }
.tag b { background: #ffe600; font: bold 10px/10px "Liberation Sans", sans-serif; align-self: flex-start; }
.vscroll { width: 16px; flex: none; display: flex; flex-direction: column; background: #f0f0f0; }
.vscroll button { height: 19px; flex: none; }
.arrow { width: 6px; height: 4px; color: #444; }
.vtrack { flex: 1; padding: 73px 1px 3px; display: flex; }
.vthumb { flex: 1; border: 1px solid #979797; border-radius: 2px; background: repeating-linear-gradient(#555 0 1px, transparent 1px 3px) center / 7px 8px no-repeat, linear-gradient(90deg, #f4f4f4, #c9c9cd); }

/* component list */
.mid { display: flex; flex-direction: column; min-height: 0; padding: 0 0 0 2px; }
.comptools { height: 25px; gap: 8px; padding-left: 4px; margin: 1px 0; }
.comptools .tb { padding: 0; }
.search { display: flex; border: 1px solid #b8b8b8; height: 25px; background: #f5f5f5; }
.search input { flex: 1; min-width: 0; margin: 1px; border: 1px solid #fff; background: #cce8cf; padding: 0 1px; font: inherit; }
.search input::placeholder { color: #808080; }
.search button { width: 26px; background: #f6f9fc; }
.complist { height: 208px; border: 1px solid #8b8d94; border-top-width: 2px; background: #cce8cf; }
.cnode { display: flex; align-items: center; gap: 5px; padding-left: 10px; height: 16px; margin-top: 1px; }
.cnode .ic { width: 14px; height: 14px; }
.cleaf { padding-left: 30px; background: repeating-linear-gradient(90deg, #8a8a8a 0 1px, transparent 1px 2px) 31px 8px / 10px 1px no-repeat; }
.cleaf .sel { display: flex; align-items: center; gap: 8px; width: 51px; height: 16px; padding-left: 4px; margin-left: 10px; background: #316ac5; }

/* drawings */
.draw { margin-top: 5px; }
.tabs { display: flex; height: 20px; margin-top: 1px; overflow: hidden; }
.tab { border: 1px solid #8b8d94; padding: 0 6px; background: #ececec; overflow: hidden; justify-content: flex-start; margin-top: 2px; }
.tab.on { background: #fff; border-bottom: 0; margin: 0; flex: none; }
.tab:not(.on) { flex: 1; min-width: 0; padding: 0 3px; border-left: 0; }
.tabnav { display: flex; flex: none; }
.tabnav button { width: 16px; height: 16px; border: 1px solid #a0a0a0; background: linear-gradient(#fafafa, #d8d8d8); color: #2f62c0; }
.tabbody { border: 1px solid #8b8d94; background: #fff; padding: 4px 1px 2px 4px; }
.drawtools { display: flex; height: 22px; background: #f7f7f7; }
.drawtools button { border: 1px solid #a0a0a0; background: #f0f0f0; padding: 0 4px; }
.drawtools .ext { margin-left: auto; padding: 0 1px 10px; }
.gridbox { border: 1px solid #8b8d94; margin-top: 2px; padding: 1px; background: #cce8cf; }
table { border-collapse: collapse; table-layout: fixed; width: 100%; }
th { font-weight: normal; padding: 0; }
td { padding: 0 2px; white-space: nowrap; overflow: hidden; border: 1px solid #c0c0c0; }
.num { width: 21px; text-align: center; background: linear-gradient(90deg, #fff, #ececec); border: 1px solid #c0c0c0; border-left: 0; }
.gold { background: linear-gradient(#fbdc9e, #f1bd60); color: #5c0050; }
.cur .num { background: #ffd38b; color: #5c0050; }
.sheets thead tr { height: 25px; }
.sheets tbody tr { height: 18px; }
.sheets .cur td { background: #eef850; border: 2px solid #000; border-right: 0; }
.box { display: inline-flex; align-items: center; justify-content: center; width: 12px; height: 12px; border: 1px solid #8b8d94; background: #f0f0f0; color: #000; font: 12px/10px "Liberation Mono", monospace; margin: 0 4px 0 1px; vertical-align: middle; }
.hscroll { display: flex; margin-top: 25px; height: 17px; background: #f0f0f0; }
.hscroll button { width: 17px; }
.htrack { flex: 1; display: flex; }
.hthumb { width: 15px; margin: 1px 0; border: 1px solid #979797; border-radius: 2px; background: linear-gradient(#f4f4f4, #c9c9cd); }
.layers { margin-top: 7px; flex: 1; }
.layerlist { flex: 1; border: 1px solid #8b8d94; background: #cce8cf; padding: 1px 0 0 10px; margin-top: 1px; }
.layerlist label { display: flex; align-items: center; height: 14px; }
.layerlist .twist { width: 15px; color: #888; }
.layerlist input { width: 12px; height: 12px; margin: 0 3px 0 0; appearance: none; border: 1px solid #8b8d94; background: #eef0f2; }

/* work area */
.work { display: flex; flex-direction: column; min-width: 0; min-height: 0; }
.barrow { display: flex; height: 28px; flex: none; gap: 2px; }
.bar { min-width: 0; }
.barrow .bar { height: 26px; padding-left: 3px; }
.grow { flex: 1; }
.grip { width: 2px; height: 16px; margin: 0 4px 0 2px; flex: none; background: repeating-linear-gradient(#a9b5ac 0 2px, transparent 2px 4px); }
.grip.slim { margin-right: 2px; }
.tb { gap: 4px; padding-right: 7px; height: 22px; flex: none; }
.tb[disabled] { color: #8d968f; }
.tb.on { padding: 0 3px; border: 1px solid #3c96ec; background: #cfe3e2; gap: 3px; }
.tb.mid4 { padding: 0 3px; }
.tb.tight { padding-right: 8px; }
.ic { width: 16px; height: 16px; }
.caret { width: 5px; height: 3px; margin-left: -1px; }
.tb:has(.far) { gap: 3px; padding-right: 5px; }
.caret.far { margin: 0 0 0 6px; }
.draws .tb:first-of-type { padding-left: 2px; gap: 2px; }
.sep { width: 1px; height: 18px; margin-right: 5px; background: #a9b5ac; flex: none; }
.sep.wide { margin: 0 3px 0 2px; }
.more { margin: 0 4px 10px auto; }
.more svg { width: 9px; height: 7px; }
.draws { width: 694px; flex: none; }
.blank { width: 23px; height: 24px; background: #cce8cf; }
.combo { display: flex; align-items: center; width: 69px; height: 22px; margin-right: 3px; background: linear-gradient(90deg, #cce8cf 83%, #dfeee2 83%); flex: none; }
.combo.small { width: 57px; }
.combo select { flex: 1; min-width: 0; appearance: none; border: 0; background: none; font: inherit; padding: 0 2px; color: #000; }
.combo .caret { margin: 0 4px 0 0; }
.view { flex: 1; min-height: 0; width: 100%; background: #000; }
.status { height: 3px; flex: none; background: #e4efe6; }

.scene { shape-rendering: crispEdges; }
.g { fill: #606060; } .l { fill: #adadad; } .m { fill: #747474; }
.p { fill: #440084; } .v { fill: #7400ea; } .o { fill: #827e00; } .od { fill: #9a9800; } .y { fill: #e8e400; }
.b { fill: #00e800; } .d { fill: #007c00; } .lg { fill: #4ce84c; } .ld { fill: #2a802a; }
.pt { fill: #9eb65c; } .pd { fill: #5a6632; } .pm { fill: #7b8c45; } .mg { fill: #f0f; }
.w, .r, .n, .dr, .pl, .yd { fill: none; stroke-width: 3; }
.w { stroke: #fff; } .r { stroke: #f00; } .n { stroke: #008000; } .dr { stroke: #900; } .pl { stroke: #440084; } .yd { stroke: #c8b800; stroke-dasharray: 14 10; }
.dash { stroke-dasharray: 12 6; }
.c { fill: none; stroke: #8c8c8c; stroke-width: 3; }
.lab { font: 51px "Noto Sans", sans-serif; fill: #eee; }
.ax { font: 300 38px "Open Sans", sans-serif; }

/* property editor */
.propbox { flex: 1; margin: 1px 1px 0 0; border: 1px solid #8b8d94; border-bottom: 0; padding: 0 3px 0 1px; background: #cce8cf; }
.props { position: relative; }
.proptable thead tr { height: 22px; }
.proptable tbody tr { height: 19px; }
.proptable .name { width: 121px; background: linear-gradient(#fdfdfd, #ececec); border: 1px solid #c0c0c0; border-top: 0; }
.proptable td:nth-child(2) { padding-left: 20px; }
.proptable .cur td { background: #b7dcd9; }
.proptable .cur td:nth-child(2) { background: #3399ff; color: #fff; }
.proptable .key td:nth-child(2) { color: #00f; }
.off td { color: #808080; }
.proptable .group:nth-child(2) { padding-left: 3px; }
.handle { position: absolute; right: 0; bottom: 14px; width: 10px; height: 59px; border-radius: 3px; border: 1px solid #333; background: repeating-linear-gradient(#ccc 0 1px, transparent 1px 3px) center / 4px 45px no-repeat, #4a4f55; }
```
